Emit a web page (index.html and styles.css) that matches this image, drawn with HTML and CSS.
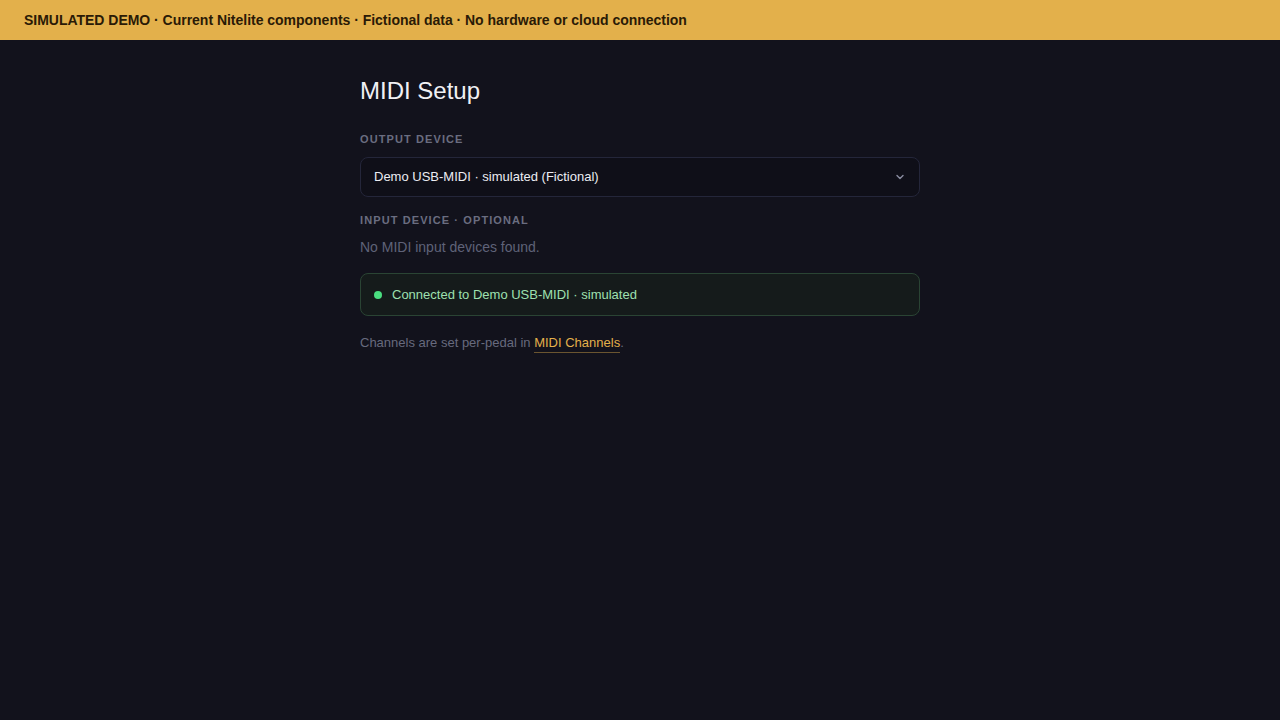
FILE: index.html
```html
<!DOCTYPE html>
<html lang="en">
<head>
<meta charset="utf-8">
<title>MIDI Setup</title>
<link rel="stylesheet" href="styles.css">
</head>
<body>
<div class="banner">SIMULATED DEMO · Current Nitelite components · Fictional data · No hardware or cloud connection</div>
<main class="page">
  <h1 class="title">MIDI Setup</h1>
  <div class="label">OUTPUT DEVICE</div>
  <div class="select">
    <span>Demo USB-MIDI · simulated (Fictional)</span>
    <svg class="chev" width="12" height="12" viewBox="0 0 12 12"><path d="M3 4.5 L6 7.5 L9 4.5" fill="none" stroke="#8a8da0" stroke-width="1.4" stroke-linecap="round" stroke-linejoin="round"/></svg>
  </div>
  <div class="label label2">INPUT DEVICE · OPTIONAL</div>
  <p class="muted">No MIDI input devices found.</p>
  <div class="status"><span class="dot"></span><span>Connected to Demo USB-MIDI · simulated</span></div>
  <p class="note">Channels are set per-pedal in <a class="link" href="#">MIDI Channels</a>.</p>
</main>
</body>
</html>
```
FILE: styles.css
```css
* { box-sizing: border-box; }
html, body { margin: 0; padding: 0; }
body {
  background: #12121c;
  font-family: "Liberation Sans", Arial, sans-serif;
  color: #e8e8ee;
  min-height: 720px;
}
.banner {
  height: 40px;
  background: #e3b04b;
  color: #2a1a06;
  font-weight: bold;
  font-size: 14px;
  line-height: 40px;
  padding-left: 24px;
  letter-spacing: -0.02px;
}
.page {
  width: 560px;
  margin: 0 auto;
  padding-top: 37px;
}
.title {
  margin: 0;
  font-size: 24px;
  font-weight: normal;
  line-height: 28px;
  color: #f0f0f4;
}
.label {
  margin-top: 27px;
  font-size: 11px;
  font-weight: bold;
  letter-spacing: 1.1px;
  color: #6a6d80;
  line-height: 14px;
}
.label2 { margin-top: 16px; }
.select {
  margin-top: 11px;
  height: 40px;
  border: 1px solid #24263a;
  border-radius: 8px;
  background: #0f0f18;
  display: flex;
  align-items: center;
  justify-content: space-between;
  padding: 0 13px 1px 13px;
  font-size: 13px;
  color: #ececf2;
}
.chev { display: block; }
.muted {
  margin: 11px 0 0;
  font-size: 14px;
  line-height: 18px;
  color: #5f6278;
}
.status {
  margin-top: 17px;
  height: 43px;
  border: 1px solid #2a4434;
  border-radius: 8px;
  background: #151b1b;
  display: flex;
  align-items: center;
  gap: 10px;
  padding-left: 13px;
  font-size: 13px;
  color: #9ee0b0;
}
.dot {
  width: 8px;
  height: 8px;
  border-radius: 50%;
  background: #4ade80;
}
.note {
  margin: 19px 0 0;
  font-size: 13px;
  line-height: 16px;
  color: #676a7e;
}
.link {
  color: #e3b04b;
  text-decoration: none;
  border-bottom: 1px solid #6b5530;
  padding-bottom: 2px;
}
```
